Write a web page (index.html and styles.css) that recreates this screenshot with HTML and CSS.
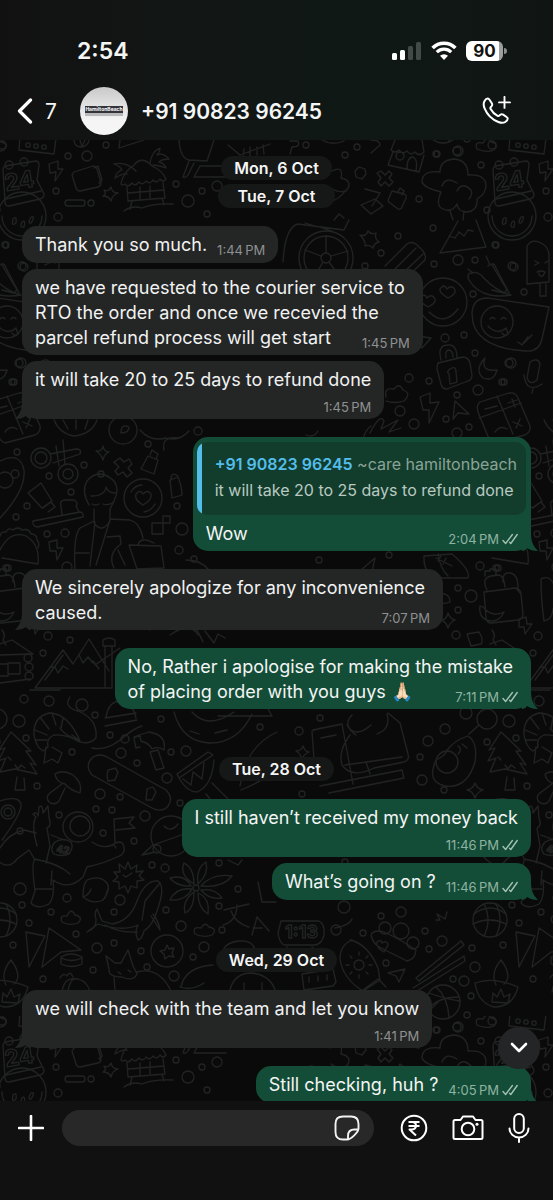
FILE: index.html
```html
<!DOCTYPE html>
<html lang="en">
<head>
    <meta charset="UTF-8">
    <meta name="viewport" content="width=device-width, initial-scale=1.0">
    <title>Chat</title>
    <link rel="stylesheet" href="styles.css">
</head>
<body>
    <!-- shared icons -->
    <svg class="defs" width="0" height="0" aria-hidden="true">
        <symbol id="ticks" viewBox="0 0 16 12">
            <path d="M1 7.5l2.6 3L10.4 1.5M7.6 9.2l1.2 1.3L15.2 1.5" fill="none" stroke="currentColor" stroke-width="1.4" stroke-linecap="round" stroke-linejoin="round"/>
        </symbol>
        <symbol id="tail" viewBox="0 0 16 18">
            <path d="M0 0h9c0 8 2 13 7 18-5 0-8-1-11-3-1 2-3 3-5 3z" fill="currentColor"/>
        </symbol>
    </svg>

    <header class="top">
        <div class="status">
            <span class="clock">2:54</span>
            <div class="status-icons">
                <svg width="30" height="20" viewBox="0 0 30 20" aria-hidden="true">
                    <rect x="0" y="12" width="5" height="7" rx="1.5" fill="#fff"/>
                    <rect x="8" y="9" width="5" height="10" rx="1.5" fill="#fff"/>
                    <rect x="16" y="5" width="5" height="14" rx="1.5" fill="#434947"/>
                    <rect x="24" y="1" width="5" height="18" rx="1.5" fill="#434947"/>
                </svg>
                <svg width="26" height="20" viewBox="0 0 26 20" fill="none" stroke="#fff" aria-hidden="true">
                    <path d="M1.6 7a16 16 0 0 1 22.8 0" stroke-width="3.6"/>
                    <path d="M5.8 11.2a10.2 10.2 0 0 1 14.4 0" stroke-width="3.2"/>
                    <path d="M13 19l-4-4.2a5.8 5.8 0 0 1 8 0z" fill="#fff" stroke="none"/>
                </svg>
                <div class="battery"><span>90</span></div>
            </div>
        </div>
        <div class="contact">
            <button class="back" aria-label="Back">
                <svg width="16" height="26" viewBox="0 0 16 26" fill="none" stroke="#fff" stroke-width="3.2" stroke-linecap="round" stroke-linejoin="round"><path d="M13.5 2L2.5 13l11 11"/></svg>
                <span>7</span>
            </button>
            <div class="avatar"><div class="brand"><b>HamiltonBeach</b><i></i></div></div>
            <h1>+91 90823 96245</h1>
            <button class="call" aria-label="Call">
                <svg width="30" height="30" viewBox="0 0 30 30" fill="none" stroke="#fff" stroke-width="2" stroke-linecap="round" stroke-linejoin="round">
                    <path d="M2.4 5.2C3.2 3.8 4.6 2.6 5.8 2.6c.8 0 1.3.5 1.7 1.1l2.3 3.5c.7 1.1.5 2-.2 2.9l-1 1.2c-.4.5-.4.9-.1 1.5 1.6 3.1 4.1 5.5 7.1 7.1.6.3 1 .3 1.5-.1l1.2-1c.9-.7 1.8-.8 2.9-.1l3.4 2.3c.7.4 1.1 1 1.1 1.7 0 1.3-1.3 2.7-2.7 3.5-1.7.9-4.2.8-6.600-.2C9.800 23.400 5.200 18.600 2.700 12.600c-1.200-2.700-1.300-5.500-.3-7.400z"/>
                    <path d="M22.500 0.900v11M17 6.400h11" stroke-width="1.900"/>
                </svg>
            </button>
        </div>
    </header>

    <main class="chat">
        <svg class="wallpaper" aria-hidden="true">
            <defs>
                <g id="doodles">
                    <g id="rings"></g>
                    <!-- chat box, calendar, bolt, can, hut -->
                    <path d="M20 136l-1 14 35 4 2-16"/>
                    <circle cx="28" cy="145" r="2.200"/><circle cx="36" cy="146" r="2.200"/><circle cx="44" cy="147" r="2.200"/>
                    <path d="M5 166l31-5q3 0 3 4l-2 15 7 14q0 4-4 5l-31 7q-4 0-4-4l-2-32q0-3 2-4zM6 199l35-8"/>
                    <circle cx="9" cy="165" r="4"/><circle cx="24" cy="162" r="4"/>
                    <text x="6" y="191" transform="rotate(-9 6 191)">24</text>
                    <path d="M49 164l9-3 0 8 5 0-8 12 1-9-6 1zM74 172l19-6q3 0 4 3l4 14q0 3-3 4l-18 4q-3 0-4-3l-4-13zM94 168l4-2 4 14-3 3"/>
                    <path d="M121 184q2-12 13-19 8-10 18 1 11 5 14 13-3 4-6 0-3 5-7 1-3 5-7 1-3 5-7 1-4 5-7 1-4 5-7 1-3 2-4 0zM127 187l1 14 37-3-2-15M132 201l-2 8M162 198l2 7M124 211q8-6 18-3 12-5 31-4M140 187v12M150 186v12M128 193l36-3"/>
                    <path d="M136 171q-10-10-22-7 6 2 8 6-6 2-7 8 8-5 12-4M150 163q2-12 10-15 0 4-3 7 6-3 12 4-7 0-10 3 5 1 7 6-8-3-13-3"/>
                    <path d="M104 190q5 2 7-3 1 6 7 6-6 2-7 8-2-5-8-5 4-2 1-6zM68 200h14a3 3 0 0 1 0 6h-14a3 3 0 0 1 0-6z"/>
                    <path d="M74 140q0 7 8 7 6-1 7-7M80 140l2 7 3-7M120 140l-1 8 25-8M179 140q1 18 10 20l18 1 7-21M189 161l-6 16q3 1 5-2l6-12M194 177l6-11 28 0M194 177h32M228 145l12 10 30-11 M243 157l1-8M250 156v-9M257 155v-8M264 154l-1-9"/>
                    <!-- food stall, cloud, broccoli -->
                    <path d="M395 140l-4 10q4 4 8 0 3 5 8 1 3 5 8 1 4 5 9 0l-2-12M393 152l-5 13 31 7 5-17M407 169q0-12 6-12 5 2 3 14M290 141l8 0q3 6-6 6l-2 7M371 140q9 0 9 5l-9 8M322 140q10 6 22 1"/>
                    <circle cx="400" cy="156" r="4"/>
                    <path d="M477 149q-3-8 6-6 4-7 8-1 9 2 3 8-8 3-17-1zM441 192q-17-4-19-10 0-12 18-10 0-12 14-13 14 1 14 16 18-1 18 11-1 9-9 13 1 12-10 13-9 0-10-8-5 9-14 5-8-3-2-17M442 186q4-10 15-3M457 191q5-10 14-1 2 5-2 9M450 211l3 9M464 211l-1 9"/>
                    <path d="M377 173l4-2 4 4 4-4 3 3-3 4 4 4-4 4-4-4-4 4-3-4 3-4zM355 171l4-4 6 2 1 5-4 5-6-2zM392 191l12 3q3 1 2 4l-4 9q-1 3-4 2l-8-6q-3-2-1-5zM398 192l2-4 4 3-2 4M365 189l15 4-8 13M361 205l14-6 8 7-12 8zM330 172q14-8 11 6 13 3 5 13-9 2-15-3M310 190q10 0 19 12 10-2 17-12M334 220l5-6 5 4"/>
                    <!-- fruit, wheel, eraser, mountain -->
                    <circle cx="512" cy="216" r="24"/><path d="M492 216a20 20 0 0 0 40 0M503 219q4-4 3 4-5 4-3-4zM512 222q4-3 2 5-5 1-2-5zM521 217q5-2 0 6-4 1 0-6z"/>
                    <circle cx="326" cy="258" r="27"/><circle cx="326" cy="258" r="22"/><circle cx="326" cy="258" r="5"/>
                    <path d="M326 253v-17M321 256l-16-6M331 256l17-5M323 262l-9 15M329 262l11 15M283 262q2-35 15-38l46 6 5-10M305 223l27 8M360 235q6 2 8-4 3 4 8 2-2 5 3 9-5 1-6 6-3-4-8-2 1-5-5-11zM385 266l22-22q6-4 12 3 8 6 6 13l-17 16M394 270l22-22M401 275l22-21M440 253l18-32M476 220l10 27-46 6M449 236l6 2 4-6 5 4 4-6 5 1"/>
                    <path d="M527 284v-38q5-8 14-3 8 4 8 13v26zM540 284v12h6v-12M535 261l4 2-4 2M548 261l-3 2M537 272q4-2 8 0l-2 4q-4 1-4-3"/>
                    <path d="M472 273q-6 0-3 7 12 20 42 15-16-4-30-20-5-4-9-2zM488 266q6-5 8 2l13 25M473 273l-5-4M490 265l-4-9"/>
                    <!-- faces, lock, moon, mic, calculator -->
                    <circle cx="443" cy="302" r="24"/><path d="M428 307q-9-5-8-9 4-6 7 0 5-5 8 1 1 4-7 8zM448 298q-9-5-8-9 4-6 7 0 5-5 8 1 1 4-7 8zM429 312q15 15 29-3M472 313q1-15 15-15l62 9-7 32q-3 13-16 12-45-2-53-28zM518 342l4 3 6-8M524 343l8-8"/>
                    <circle cx="497" cy="322" r="16"/><path d="M490 319q3-3 5 0M501 319q3-3 5 0M488 326q9 10 18 2l2 6q-3 3-6-1M2 265l12 20q5 5 0 8l-12-3"/>
                    <path d="M438 363l25-6q5 0 7 6l2 12q0 5-4 6l-21 8q-5 0-6-5l-4-15q0-4 1-6zM441 360q-4-15 7-15 9-1 9 13M446 358q-1-8 3-8 4 1 4 7M450 369q6-4 6 3l1 10-7 2-1-10q-3-2 1-5zM485 358q-5 14 12 12-3 12-14 8-9-8 2-20zM530 362q8-5 10 2l-3 16q-7 6-10-2zM524 375q2 19 18 9M533 389l-1 4"/>
                    <path d="M420 397l10-4 0 10 9-1-10 21 0-13-6 0zM455 401l14 13-11-1-5 6zM417 336l14 2-9 10zM480 402l29-9q7-1 9 5l12 28q1 6-5 9l-30 8q-6-3-8-9l-9-22q-2-7 2-10zM497 396l16 38M479 418l42-15M485 409l12-3M508 403l9-3M512 399l3 8M513 422l9 4M520 419l-4 9M495 432q5-7 12-3"/>
                    <path d="M386 397q-2-10 8-8 5-7 9 1 9 3 1 11-9 3-18 0M370 433q10-20 14-12l-3 8 17-9-9 12 12-4M363 440q2-10 8-14M306 435q8 3 12-4"/>
                    <circle cx="123" cy="430" r="14"/><path d="M121 433q0-10 8-6 0 6-8 6zM54 420q6 14 20 16 18-2 23-16M63 420l5 9M76 420v9M88 420l-3 9M140 430q10 12 26 8 13 4 23-7"/>
                    <!-- drone, man with bag, coffee, taco -->
                    <circle cx="41" cy="458" r="10"/><circle cx="41" cy="458" r="6"/><circle cx="68" cy="474" r="10"/><circle cx="68" cy="474" r="5"/>
                    <path d="M50 454l26-5q6 0 4 5l-27 9M56 446l3 20M63 440l2 24M96 451q6 1 7-5 1 6 6 6-5 2-6 8-2-6-7-9zM114 462l6-4 4 4 5-3 3 5-4 4 4 5-5 4-4-5-5 3-3-4 4-4zM148 456l10 4-4 14-13-5zM150 455l2-5 6 4-2 5M0 461q20-10 24 9 2 20-24 48"/><circle cx="5" cy="480" r="8"/><circle cx="15" cy="474" r="4"/>
                    <path d="M28 493l13-10 11 18-10 7zM43 508l8-6 4 5-7 5M33 521l47-9q4 1 3 5l-46 10q-5-1-4-6zM62 515l-1-9q-2-6 5-6h8q5 3 2 6l3 6M170 480l8-3q4 10 4 18l-10 3zM171 480q0-9 7-4"/>
                    <path d="M89 505q-8-14-2-24 12-14 27 0 6 8 0 20l-4 8v12q-8 13-16 2v-14M91 496q14 0 15-9 2 6 9 6M92 504q4 2 7 0M103 504q5 2 11-2M94 521l-14 7q-7 8-5 42M110 519l20 1q10 3 13 18M95 522l-5 44M110 520l-14 45M75 553h14M107 537l13-1 1 8q-14 10-7 24M118 550l7 15M129 545l32 1 3 22-27 1zM138 545q2-9 16-2"/>
                    <circle cx="143" cy="498" r="19"/><path d="M143 505q-9-5-7-11 4-5 7 0 5-5 8 0 1 6-8 11zM131 492q4-7 11-7M155 504q-4 7-11 8M152 523h11v11h-11zM163 516h7v7h-7zM0 550q10-20 26-14 14 8 12 28l-36-6M0 536q1-5 6-4 2-5 7-2 5-4 9 0 7-2 9 4 6 0 6 6 3 3 1 8M49 542l8-2 0 8 6 0-6 12-1-9-6 0zM164 450q-3-14 14-12M186 560q15 0 23 10"/>
                    <!-- backpack, banana, football, bits -->
                    <path d="M484 592l31-4q5 0 6 6l2 20q0 5-5 6l-27 3q-4 0-5-5zM487 590q-6-12 4-14l8-1q5 1 6 12M485 576v-5h5v-2h6v6M503 582q-1-10 7-9 8 1 8 15M516 588l5 6M480 606q-2 14 12 15 8 0 12-9-12 6-21-5zM541 579q8-4 12 4M541 579q0 20 3 42 8-1 9-12"/>
                    <path d="M424 556q-1 22 20 22h24q3-8-16-24zM438 554q2 14 10 22M436 558l16 8M441 556l-3 5M446 558l-3 6M361 570l14-12-4 18-4-6zM440 620q6 1 8-7 2 6 7 7-5 2-7 8-2-7-8-8zM437 601q-2-9 8-7 5 2 5 8-8 3-13-1M467 634l12-2q5 8 2 12l-10 2zM519 619l7-2 1 7 5 0-7 10-1-7-5 0zM492 630q4 5 1 10l3 5"/>
                    <!-- cabin, peaks, well, record -->
                    <path d="M0 644l12-4 21 14-33 1M0 664h8v12h-8M8 663h12v11h-12zM0 683l30-4"/><circle cx="28" cy="658" r="4"/><circle cx="29" cy="667" r="4"/><circle cx="29" cy="676" r="4"/>
                    <path d="M35 688l28-38 10 14 16-25 20 32M50 667l5 0 3 6 5-7 5 3M79 655l4 8 5-6 5 6M35 688h77M103 640q6-4 12 0v6h-12zM105 646v42M112 646v42M95 665l25-17M93 661l6 8M150 630q35-30 53 12M170 635q20-14 28 0M205 631l9 12 4-9 7 4M535 680l18-25M520 690h30"/>
                    <path d="M106 718q2-17 15-17 12 2 15 17M105 718l31-5M105 726l32-6M70 697q-7 10 8 14 20 8 18 27-10 10-25-1-8-4-11-9M92 748q14 3 28-8 14-12 22-14"/>
                    <path d="M174 712q8 30 36 31 28 0 42-29M192 712q16 18 42 0M218 716h54l-8-14M190 731l9 3M215 733l12-3"/>
                    <!-- shrimp, tree, mushroom, skateboard, hammer, drum -->
                    <path d="M80 741q-12-28-31-28-16 4-15 22 2 12 9 16l5-4q-2-9 6-12 11-1 26 6zM46 747l-2 16 8-4 6 4 4-10-10-6M40 717l9 12M52 713l4 12M63 718l-2 10M35 730l12 5M36 740l11 0M72 735l8 6"/>
                    <path d="M11 732l-12 18 6-2-7 13 8-3-6 14 15-3 22 5-7-11 6 2-10-14 5 0zM17 777l-2 13 10 0-1-12M15 765l3 4 3-4 4 3M8 757l3 3"/>
                    <path d="M55 774q8-5 18 1 10 8 7 18-10-3-15-9-9-2-10-10zM62 784l-12 9q-5 4-1 9 6 4 10-1l6-13M93 757q7-4 14 0l59 33q8 8 2 16-6 7-16 2l-60-33q-8-10 1-18zM108 770l7-2 3 4-3 8-7 1-1-5zM147 789l6-2 3 5-4 8-6 0zM134 737l6-1 1 5q8 2 11 8 6-3 12 1 3-15-15-18l-13 4-2 3 2 9 4-1M150 752l8-2 6 18-8 2z"/>
                    <path d="M177 774l31-22 5 3-34 23zM179 778q8 14 18 14 15-6 17-32M183 779l8 6 2-13 9 7 2-16M206 794l8 10M212 783l20 20M240 786q6-40 37-54M241 790q22-9 36-20M320 728l-8 3 3 43 8 6M313 730l29-6 11 60M352 715q-10 10 4 20M387 714q4 15-10 20M347 725q8 14 24 0M321 738l15-3M350 735q-12 16-8 30 10 14 32 3l30-6q6-2 4-8l-8-31-12-10M345 765l57-8M366 762l4 12M320 786l82-16 2 8-75 15M436 760q-10 22 9 26 22 3 30-24 3-20-7-26-13 4-20 13-3 7-12 11zM458 746q5 3 0 8M462 744l5 4"/>
                    <circle cx="447" cy="762" r="11"/><circle cx="487" cy="719" r="10"/><path d="M479 725l-10 9M296 751q5 0 7-5 2 6 6 6-5 2-7 7-2-6-6-8zM467 790q6-1 8-7 2 6 8 7-6 2-8 8-2-7-8-8z"/>
                    <!-- astronaut, flag, smiley cap -->
                    <circle cx="78" cy="827" r="15"/><circle cx="80" cy="826" r="10"/>
                    <path d="M37 846q-6-22-1-29l-3-3q4-3 5 2l1-9q4-3 4 6l5-7 1 12q3 8-2 10l3 18-4 17M51 835l13 5M92 842q12 8 22 2 6-4 9 0 4 10-6 13-12 6-30 10l-4 10q-14 14-30 3 2 17-4 24-12 6-18-1 2-6 4-12-4-30 0-31l-6-10-12 9q-10 14-25-4l8-7q8-14 24-18l12 3M34 859q24 4 36 15M52 871l-1 14M35 889l17 0M112 846q0-4 4 2M115 842l-1-23 20-2-5 6 6 5-19 2M55 842q8-5 16 0 3 6-2 12-7 3-15 0-5-5 1-12z"/>
                    <text class="small" x="56" y="852" transform="rotate(10 56 852)">42</text>
                    <circle cx="171" cy="836" r="20"/><path d="M164 826q7 7 14-2M142 855l11-10 37-13 M155 852l-13 3"/><circle cx="157" cy="849" r="4"/>
                    <path d="M2 840q20-27 19-36-3-9-21-3"/><circle cx="8" cy="812" r="7"/><circle cx="8" cy="812" r="4"/>
                    <!-- badge, stone, whale, flower -->
                    <path d="M128 862l3 7 6-4-1 7 7-1-4 5 5 4-7 1 0 7-6-2-3 7-3-7-6 3 0-7-6-1 5-4-4-5 6 0-1-8 6 5zM123 875l3 2 6-4M87 880q12-5 19 2 6 6-3 18-10 5-20-3 0-13 4-17zM91 889q-2 6-8 8M105 898l3-9"/>
                    <path d="M87 932q10-4 9-13-2-6 1-10l5 12 10 3q18-3 25-23 8-21 21-20 8 5-1 30-4 14-13 20-2 8-6 9-4-8 0-15-15 7-40-1zM160 883l-15 18-3 19M151 916l9 14q-1-8-7-16M105 925q14 8 32 7"/>
                    <circle cx="196" cy="888" r="3"/><path d="M194 884q-15-9-10-21 10 5 10 21M198 884q-2-16 8-22 3 12-8 22M201 886q11-13 31-10-9 12-31 10M201 890q14-2 21 8-13 2-21-8M198 893q12 5 10 21-10-6-10-21M194 892q0 17-9 21-3-12 9-21M192 889q-6 12-22 11 6-13 22-11M191 886q-14 1-21-8 15-4 21 8"/>
                    <path d="M62 922q-3-7 5-6 4-9 8-1 9 2 3 8-8 3-16-1zM195 934q-3-8 6-6 4-7 8-1 9 2 3 8-8 3-17-1zM258 882l4 20h14M228 860l10 5 4-5M224 910l25-6M237 905q0 16-14 20M231 911q4 12 18 16M252 935l5-18 12 14M253 928h9M255 950q-2-10-16-9-12 1-16 9"/>
                    <!-- cards, coin, fox, ball, lamp -->
                    <path d="M26 932l19 4-16 31zM49 928l32 22-20 2-19 15zM61 957q10-6 21 0v7q-10 5-21 0zM61 958q10 5 21 0"/><circle cx="167" cy="951" r="16"/><path d="M167 945l2 4 5-1-2 5 2 4-5-1-4 3-1-5-4-3 5-1z"/>
                    <circle cx="0" cy="920" r="17"/><path d="M-16 914q16-12 32 0M-17 924q16-8 33 0M-6 904q8 16 0 32M6 904q8 16 0 32"/>
                    <path d="M106 956l9 7 6 0 7-13 5 16 4 8q-4 8-15 3-14 0-13-8zM137 972q22-6 34 19M114 977l1 14M118 972l3 2M128 970l3 2M-15 983q18-7 43 4-5 20-24 20-16-4-19-24zM6 985q-6-12 5-25 12 16 3 24M2 1002l1-9 4 4 4-8 3 8 6-3-2 9z"/>
                    <path d="M62 992q2-16 16-13 10 3 12 13M68 991q3-14 8-12M60 978q3-6 7-2 3-6 6 1M181 987q4-20 32-22M180 987q12 4 24-4M190 1000h20M230 990q4-17 22-17 18 2 23 17M244 983v7M262 983v7M335 928q15-3 17-9M281 921h38q6 3 5 14-2 9-9 10h-31q-5-3-6-12zM287 947l-1 4M312 947l3 3"/>
                    <text x="285" y="938" class="mid">1:13</text>
                    <circle cx="385" cy="928" r="6"/><circle cx="401" cy="931" r="8"/><circle cx="413" cy="943" r="6"/><path d="M371 935q2 10 12 14l24 12q8-1 9-11-18-12-32-18-10-3-13 3zM384 952q-9-5-7-10 4-3 5 1 6-3 6 2zM350 940q18 4 28 28l2 12-17 11q-20-12-23-32 0-14 12-19zM363 990l15-11 8 8M302 974l31-5 3 13-3 4-29 4zM309 977v5M318 976v5M327 975v5"/>
                    <circle cx="359" cy="965" r="5"/><path d="M359 955v-3M359 975v3M349 965h-3M369 965h3M352 958l-2-2M366 958l2-2M352 972l-2 2M366 972l2 2M388 973l17-4-6 13-3-6zM416 978l45-37 3 4-45 36zM413 988l51-32 1 5-48 30"/>
                    <circle cx="443" cy="1002" r="17"/><path d="M429 993q16 6 31 8M436 987q12 10 13 31M428 1009q10-12 31-12M436 920l4 0-3-6 8 5 2-7M430 1010l8-8"/>
                </g>
                <pattern id="tile" width="490" height="876" patternUnits="userSpaceOnUse">
                    <g transform="translate(0 -140)">
                        <use href="#doodles"/><use href="#doodles" x="-490"/><use href="#doodles" x="490"/><use href="#doodles" y="-876"/>
                    </g>
                </pattern>
            </defs>
            <rect width="100%" height="100%" fill="url(#tile)" stroke="none"/>
        </svg>

        <div class="messages">
            <div class="date">Mon, 6 Oct</div>
            <div class="date next">Tue, 7 Oct</div>

            <div class="bubble in first">
                <p>Thank you so much.</p>
                <span class="time">1:44&thinsp;PM</span>
            </div>
            <div class="bubble in lines">
                <p>we have requested to the courier service to<br>RTO the order and once we recevied the<br>parcel refund process will get start</p>
                <span class="time">1:45&thinsp;PM</span>
            </div>
            <div class="bubble in stacked">
                <p>it will take 20 to 25 days to refund done</p>
                <span class="time">1:45&thinsp;PM</span>
                <svg class="tail"><use href="#tail"/></svg>
            </div>

            <div class="bubble out reply first">
                <blockquote>
                    <div><strong>+91 90823 96245</strong> <span>~care hamiltonbeach</span></div>
                    <p>it will take 20 to 25 days to refund done</p>
                </blockquote>
                <div class="answer">
                    <p>Wow</p>
                    <span class="time">2:04&thinsp;PM <svg class="ticks"><use href="#ticks"/></svg></span>
                </div>
                <svg class="tail"><use href="#tail"/></svg>
            </div>

            <div class="bubble in lines first">
                <p>We sincerely apologize for any inconvenience<br>caused.</p>
                <span class="time">7:07&thinsp;PM</span>
                <svg class="tail"><use href="#tail"/></svg>
            </div>

            <div class="bubble out lines first">
                <p>No, Rather i apologise for making the mistake<br>of placing order with you guys <span class="emoji">🙏🏻</span></p>
                <span class="time">7:11&thinsp;PM <svg class="ticks"><use href="#ticks"/></svg></span>
                <svg class="tail"><use href="#tail"/></svg>
            </div>

            <div class="date">Tue, 28 Oct</div>

            <div class="bubble out stacked first">
                <p>I still haven’t received my money back</p>
                <span class="time">11:46&thinsp;PM <svg class="ticks"><use href="#ticks"/></svg></span>
            </div>
            <div class="bubble out">
                <p>What’s going on ?</p>
                <span class="time">11:46&thinsp;PM <svg class="ticks"><use href="#ticks"/></svg></span>
                <svg class="tail"><use href="#tail"/></svg>
            </div>

            <div class="date">Wed, 29 Oct</div>

            <div class="bubble in stacked first">
                <p>we will check with the team and let you know</p>
                <span class="time">1:41&thinsp;PM</span>
                <svg class="tail"><use href="#tail"/></svg>
            </div>
            <div class="bubble out first">
                <p>Still checking, huh ?</p>
                <span class="time">4:05&thinsp;PM <svg class="ticks"><use href="#ticks"/></svg></span>
                <svg class="tail"><use href="#tail"/></svg>
            </div>
        </div>

        <button class="scroll-down" aria-label="Scroll to latest">
            <svg width="18" height="12" viewBox="0 0 18 12" fill="none" stroke="#fff" stroke-width="2.600" stroke-linecap="round" stroke-linejoin="round"><path d="M2 2l7 7 7-7"/></svg>
        </button>
    </main>

    <footer class="composer">
        <button aria-label="Attach">
            <svg width="26" height="26" viewBox="0 0 26 26" stroke="#fff" stroke-width="2.600" stroke-linecap="round"><path d="M13 1v24M1 13h24"/></svg>
        </button>
        <div class="field">
            <input type="text" aria-label="Message">
            <button aria-label="Stickers">
                <svg width="26" height="26" viewBox="0 0 26 26" fill="none" stroke="#f2f2f2" stroke-width="1.900" stroke-linejoin="round"><path d="M13 24.500H9Q1.500 24.500 1.500 17V9Q1.500 1.500 9 1.500h8q7.500 0 7.500 7.500v4.500C24.500 17 17 24.500 13 24.500zM14 24v-3q0-6.500 6.500-6.500h3.600"/></svg>
            </button>
        </div>
        <button aria-label="Payments">
            <svg width="28" height="28" viewBox="0 0 28 28" fill="none" stroke="#fff" stroke-width="2"><circle cx="14" cy="14" r="12.300"/><path d="M8.500 8h11M8.500 12h11M9 8h3q4 0 4 3.500T12 15.500H9.500l6.500 6" stroke-linejoin="round"/></svg>
        </button>
        <button class="camera" aria-label="Camera">
            <svg width="32" height="26" viewBox="0 0 32 26" fill="none" stroke="#fff" stroke-width="2" stroke-linejoin="round"><path d="M3 5h5.500l2.500-3.500h10L23.500 5H29q1.500 0 1.500 1.500v16Q30.500 24 29 24H3q-1.500 0-1.500-1.500v-16Q1.500 5 3 5z"/><circle cx="16" cy="14" r="6.300"/><circle cx="25" cy="9.200" r="1.500" fill="#fff" stroke="none"/></svg>
        </button>
        <button aria-label="Record voice message">
            <svg width="22" height="32" viewBox="0 0 22 32" fill="none" stroke="#fff" stroke-width="2" stroke-linecap="round"><rect x="6.200" y="2" width="9.600" height="19" rx="4.800"/><path d="M1.500 16.500a9.500 9 0 0 0 19 0M11 25.500V30"/></svg>
        </button>
    </footer>

    <script>
        // small rings scattered between the doodles: x, y, radius
        const rings = [
            [2, 145, 4], [106, 145, 3], [68, 156, 3], [87, 156, 5], [56, 191, 3], [91, 203, 3], [188, 201, 6], [176, 184, 3], [202, 191, 3],
            [217, 186, 5], [207, 214, 3], [58, 217, 4], [306, 145, 3], [357, 147, 3], [345, 155, 3], [437, 154, 3], [458, 151, 5], [481, 165, 3],
            [419, 199, 3], [487, 210, 3], [5, 245, 3], [22, 266, 4], [398, 236, 3], [381, 253, 3], [365, 266, 3], [433, 228, 3], [434, 264, 3],
            [458, 260, 5], [475, 260, 3], [514, 267, 4], [496, 245, 3], [473, 294, 3], [524, 292, 3], [445, 338, 4], [464, 335, 3], [475, 353, 3],
            [511, 363, 5], [504, 382, 3], [478, 390, 5], [457, 395, 3], [409, 378, 4], [429, 381, 3], [400, 411, 5], [414, 424, 5], [446, 419, 3],
            [457, 433, 5], [469, 427, 3], [19, 363, 4], [12, 382, 3], [198, 431, 4], [148, 444, 3], [17, 452, 3], [84, 465, 3], [101, 474, 3],
            [49, 476, 3], [27, 506, 3], [16, 517, 3], [71, 492, 3], [177, 506, 3], [182, 529, 6], [179, 550, 4], [194, 559, 3], [47, 534, 3],
            [65, 533, 4], [6, 568, 3], [67, 567, 5], [48, 636, 4], [70, 640, 3], [43, 653, 3], [24, 699, 4], [49, 701, 5], [82, 705, 6],
            [19, 721, 6], [26, 738, 3], [95, 715, 3], [110, 735, 3], [125, 739, 4], [121, 753, 5], [137, 763, 3], [72, 752, 3], [161, 719, 3],
            [171, 752, 3], [186, 751, 5], [167, 778, 5], [260, 727, 3], [180, 803, 3], [100, 794, 5], [120, 797, 3], [37, 786, 3], [96, 809, 3],
            [112, 810, 3], [59, 815, 3], [145, 816, 5], [20, 831, 3], [103, 833, 3], [134, 841, 3], [152, 865, 3], [165, 868, 4], [219, 863, 3],
            [20, 889, 6], [67, 898, 4], [120, 900, 5], [22, 905, 3], [51, 912, 3], [114, 912, 3], [166, 910, 3], [238, 889, 3], [219, 906, 3],
            [181, 926, 5], [222, 930, 3], [29, 923, 3], [76, 934, 3], [97, 948, 5], [114, 943, 3], [141, 951, 3], [13, 945, 3], [193, 957, 3],
            [204, 947, 5], [43, 979, 3], [93, 970, 3], [147, 967, 3], [174, 976, 5], [336, 930, 5], [363, 933, 3], [386, 963, 3], [425, 931, 3],
            [442, 941, 5], [429, 949, 3], [472, 948, 3], [475, 967, 5], [464, 981, 5], [453, 979, 3], [471, 996, 3], [467, 1015, 3], [457, 1027, 4],
            [436, 1030, 3], [299, 731, 4], [320, 718, 3], [445, 729, 5], [428, 741, 5], [420, 757, 3], [422, 780, 5], [444, 790, 3], [302, 794, 3],
            [487, 742, 3], [466, 713, 6], [344, 907, 6], [401, 912, 5], [381, 916, 3], [345, 862, 3], [480, 566, 4], [498, 568, 3], [471, 596, 6],
            [458, 588, 3], [458, 610, 3], [456, 635, 4], [319, 560, 3], [389, 555, 3]
        ];
        document.getElementById("rings").innerHTML = rings
            .map(([x, y, r]) => `<circle cx="${x}" cy="${y}" r="${r}"/>`)
            .join("");
    </script>
</body>
</html>
```
FILE: styles.css
```css
* {
    box-sizing: border-box;
}
body {
    margin: 0;
    height: 100vh;
    display: flex;
    flex-direction: column;
    overflow: hidden;
    background: #0a0a0a;
    color: #f4f5f5;
    font-family: Inter, "Liberation Sans", sans-serif;
}
h1, p, blockquote {
    margin: 0;
}
button {
    display: flex;
    align-items: center;
    justify-content: center;
    padding: 0;
    border: none;
    background: none;
    color: inherit;
    font: inherit;
    cursor: pointer;
}
svg {
    display: block;
    flex: none;
}
.defs {
    position: absolute;
}

/* header */
.top {
    background: linear-gradient(90deg, #111111 0%, #121614 30%, #0f1815 65%, #101513 100%);
}
.status {
    display: flex;
    justify-content: space-between;
    align-items: center;
    padding: 36px 46px 0 77px;
    height: 66px;
}
.clock {
    font-size: 23px;
    font-weight: 600;
}
.status-icons {
    display: flex;
    align-items: center;
    gap: 9px;
}
.battery {
    position: relative;
    width: 37px;
    height: 20px;
    margin-right: 4px;
    border-radius: 6px;
    background: linear-gradient(90deg, #fff 90%, #9b9f9d 90%);
    color: #111;
    font-size: 17px;
    font-weight: 700;
    line-height: 20px;
    text-align: center;
}
.battery::after {
    content: "";
    position: absolute;
    right: -4px;
    top: 7px;
    width: 3px;
    height: 6px;
    border-radius: 0 3px 3px 0;
    background: #8a8e8c;
}
.contact {
    display: flex;
    align-items: center;
    height: 74px;
    padding: 16px 41px 0 17px;
}
.back {
    width: 63px;
    gap: 12px;
    justify-content: flex-start;
    font-size: 21px;
}
.avatar {
    width: 48px;
    height: 48px;
    border-radius: 50%;
    background: linear-gradient(#c9c9c9, #f5f5f5 70%);
    display: flex;
    align-items: center;
    justify-content: center;
}
.brand {
    width: 38px;
    background: #33343a;
    color: #fff;
    font-size: 5px;
    line-height: 7px;
    text-align: center;
    white-space: nowrap;
}
.brand i {
    display: block;
    height: 3px;
    background: #b9b9bb;
}
.contact h1 {
    flex: 1;
    margin-left: 13px;
    font-size: 21px;
    font-weight: 600;
}

/* chat */
.chat {
    position: relative;
    flex: 1;
    min-height: 0;
    overflow: hidden;
}
.wallpaper {
    position: absolute;
    inset: 0;
    width: 100%;
    height: 100%;
    fill: none;
    stroke: #212222;
    stroke-width: 1.3;
    stroke-linejoin: round;
    stroke-linecap: round;
}
.wallpaper text {
    font-size: 23px;
    font-weight: 700;
}
.wallpaper .mid {
    font-size: 18px;
}
.wallpaper .small {
    font-size: 10px;
}
.messages {
    position: relative;
    display: flex;
    flex-direction: column;
    padding: 16px 22px 0;
}
.date {
    align-self: center;
    margin-top: 48px;
    padding: 0 13px;
    border-radius: 12px;
    background: #161717;
    font-size: 16px;
    font-weight: 600;
    line-height: 24px;
}
.date:first-child {
    margin-top: 0;
}
.date.next {
    margin-top: 4px;
    padding: 0 20px;
}
.bubble {
    position: relative;
    display: flex;
    align-items: flex-end;
    gap: 10px;
    margin-top: 6px;
    padding: 6px 13px;
    border-radius: 15px;
    font-size: 18px;
    line-height: 25px;
    white-space: nowrap;
}
.bubble.first {
    margin-top: 18px;
}
.in {
    align-self: flex-start;
    background: #242626;
    color: #f1f2f2;
}
.out {
    align-self: flex-end;
    background: #134d37;
}
.time {
    display: flex;
    align-items: center;
    gap: 3px;
    color: #8f9191;
    font-size: 13px;
    line-height: 14px;
}
.out .time {
    color: #8fb3a3;
}
.ticks {
    width: 16px;
    height: 12px;
    color: #a3c0b3;
}
.bubble.stacked {
    flex-direction: column;
    align-items: flex-start;
    gap: 8px;
    padding-bottom: 5px;
}
.stacked .time {
    align-self: flex-end;
}
.bubble.lines {
    display: grid;
    padding-bottom: 5px;
}
.lines p {
    grid-area: 1 / 1;
    padding-right: 5px;
}
.lines .time {
    grid-area: 1 / 1;
    align-self: end;
    justify-self: end;
}
.emoji {
    font-family: "Noto Color Emoji", sans-serif;
}
.tail {
    position: absolute;
    bottom: 0;
    width: 16px;
    height: 18px;
}
.out .tail {
    right: -7px;
    color: #134d37;
}
.in .tail {
    left: -7px;
    color: #242626;
    transform: scaleX(-1);
}
.bubble.reply {
    flex-direction: column;
    align-items: stretch;
    gap: 6px;
    padding: 5px 5px 5px 4px;
}
blockquote {
    padding: 9px 9px 12px 18px;
    border-radius: 10px;
    background: linear-gradient(90deg, #53bdeb 5px, #123d2c 5px);
    color: #b9c9c1;
    font-size: 16px;
    line-height: 26px;
}
blockquote strong {
    color: #53bdeb;
    font-weight: 600;
}
blockquote span {
    color: #8ba397;
}
.answer {
    display: flex;
    align-items: flex-end;
    justify-content: space-between;
    padding: 0 8px 0 9px;
}
.scroll-down {
    position: absolute;
    right: 13px;
    bottom: 32px;
    width: 42px;
    height: 42px;
    border-radius: 50%;
    background: #242526;
}

/* composer */
.composer {
    display: flex;
    align-items: center;
    padding: 9px 23px 54px 18px;
    background: #111111;
}
.field {
    flex: 1;
    display: flex;
    align-items: center;
    height: 36px;
    margin: 0 26px 0 18px;
    padding: 0 14px 0 18px;
    border-radius: 18px;
    background: #282828;
}
.field input {
    flex: 1;
    min-width: 0;
    border: none;
    outline: none;
    background: none;
    color: #fff;
    font: inherit;
}
.camera {
    margin: 0 24px;
}
```
